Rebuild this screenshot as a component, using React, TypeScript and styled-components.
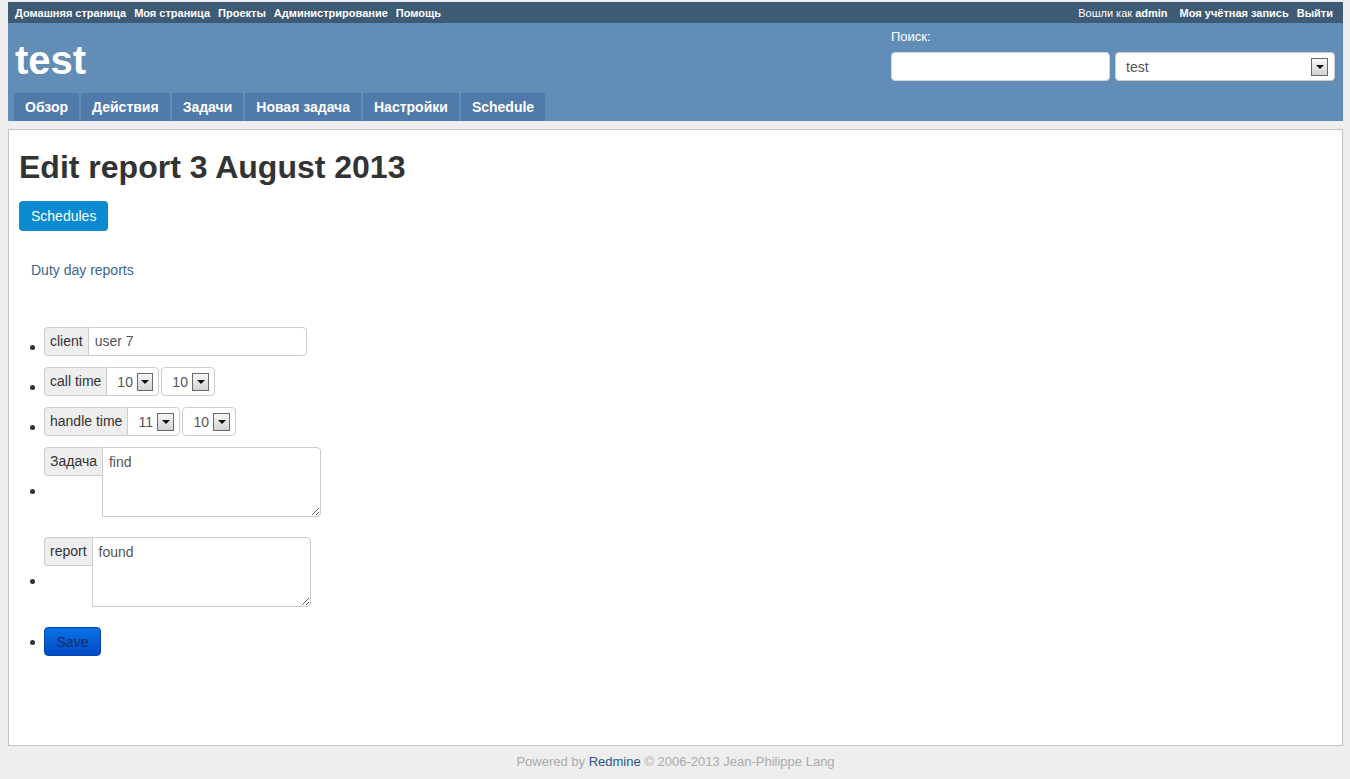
import React from "react";
import styled, { createGlobalStyle } from "styled-components";

const GlobalStyle = createGlobalStyle`
  html, body { margin: 0; padding: 0; }
  body {
    background: #eeeeee;
    font-family: "Liberation Sans", Arial, sans-serif;
    color: #333;
  }
  * { box-sizing: border-box; }
`;

const Wrapper = styled.div`
  margin: 2px 7px 0 8px;
`;

const TopMenu = styled.div`
  background: #3e5b76;
  height: 21px;
  display: flex;
  align-items: center;
  justify-content: space-between;
  padding: 0 10px 0 7px;
  font-size: 11px;
  font-weight: bold;
  color: #fff;
`;

const MenuGroup = styled.div<{ $gap: number }>`
  display: flex;
  align-items: center;
  gap: ${(p) => p.$gap}px;
`;

const MenuLink = styled.a`
  color: #fff;
  text-decoration: none;
  white-space: nowrap;
`;

const LoggedAs = styled.span`
  font-weight: normal;
  margin-right: 4px;
  white-space: nowrap;
  b { font-weight: bold; }
`;

const Header = styled.div`
  background: #628db6;
  height: 98px;
  display: grid;
  grid-template-columns: 1fr auto;
  grid-template-rows: 70px 28px;
`;

const SiteTitle = styled.h1`
  margin: 0;
  padding: 15px 0 0 7px;
  font-size: 40px;
  line-height: 44px;
  font-weight: bold;
  color: #fff;
`;

const Search = styled.div`
  padding: 6px 8px 0 0;
  display: flex;
  flex-direction: column;
`;

const SearchLabel = styled.div`
  color: #fff;
  font-size: 13px;
  line-height: 16px;
`;

const SearchRow = styled.div`
  margin-top: 7px;
  display: flex;
  gap: 5px;
`;

const SearchInput = styled.div`
  width: 219px;
  height: 29px;
  background: #fff;
  border: 1px solid #cfd8e0;
  border-radius: 4px;
`;

const SelectBox = styled.div<{ $width: number; $radius: string; $padRight: number }>`
  width: ${(p) => p.$width}px;
  height: 29px;
  background: #fff;
  border: 1px solid #ccc;
  border-radius: ${(p) => p.$radius};
  display: flex;
  align-items: center;
  padding: 0 ${(p) => p.$padRight}px 0 10px;
  font-size: 14px;
  color: #555;
`;

const SelectValue = styled.span`
  flex: 1;
`;

const ArrowBox = styled.span`
  width: 17px;
  height: 18px;
  border: 1px solid #6a6a6a;
  background: linear-gradient(#f8f8f8, #d2d2d2);
  display: flex;
  align-items: center;
  justify-content: center;
  margin-left: 4px;
  &::after {
    content: "";
    border-left: 4px solid transparent;
    border-right: 4px solid transparent;
    border-top: 4px solid #111;
  }
`;

const Tabs = styled.ul`
  grid-column: 1 / span 2;
  list-style: none;
  margin: 0;
  padding: 0 0 0 6px;
  display: flex;
  gap: 2px;
`;

const Tab = styled.li`
  background: #507aaa;
  color: #fff;
  font-weight: bold;
  font-size: 14px;
  height: 28px;
  line-height: 28px;
  padding: 0 11px;
`;

const Main = styled.div`
  margin-top: 8px;
  background: #fff;
  border: 1px solid #c4c4c4;
  height: 617px;
  padding: 18px 10px 0 10px;
`;

const Title = styled.h2`
  margin: 0;
  font-size: 32px;
  line-height: 38px;
  font-weight: bold;
  color: #333;
`;

const PrimaryButton = styled.a`
  display: inline-flex;
  align-items: center;
  margin-top: 15px;
  height: 30px;
  padding: 0 12px;
  background: #0a8ad0;
  border-radius: 4px;
  color: #fff;
  font-size: 14px;
  text-decoration: none;
`;

const SubLink = styled.a`
  display: block;
  margin-top: 29px;
  padding-left: 12px;
  font-size: 14px;
  line-height: 20px;
  color: #3a6592;
  text-decoration: none;
`;

const FormList = styled.ul`
  list-style: none;
  margin: 47px 0 0 0;
  padding: 0;
`;

const Item = styled.li<{ $after: number }>`
  display: flex;
  align-items: flex-start;
  padding-left: 11px;
  margin-bottom: ${(p) => p.$after}px;
`;

const Dot = styled.span<{ $top: number }>`
  width: 5px;
  height: 5px;
  border-radius: 50%;
  background: #333;
  margin-top: ${(p) => p.$top}px;
  margin-right: 9px;
  flex: none;
`;

const Group = styled.div`
  display: flex;
  align-items: flex-start;
`;

const Addon = styled.span`
  height: 29px;
  line-height: 27px;
  padding: 0 5px;
  background: #eee;
  border: 1px solid #ccc;
  border-right: none;
  border-radius: 4px 0 0 4px;
  font-size: 14px;
  color: #333;
  white-space: nowrap;
`;

const TextField = styled.div`
  width: 219px;
  height: 29px;
  line-height: 27px;
  border: 1px solid #ccc;
  border-radius: 0 4px 4px 0;
  padding: 0 6px;
  font-size: 14px;
  color: #555;
`;

const Spacer = styled.span`
  width: 2px;
`;

const TextArea = styled.textarea`
  width: 219px;
  height: 70px;
  border: 1px solid #ccc;
  border-radius: 0 4px 4px 0;
  padding: 5px 6px;
  font-family: "Liberation Sans", Arial, sans-serif;
  font-size: 14px;
  line-height: 18px;
  color: #555;
  margin: 0;
  outline: none;
`;

const SaveButton = styled.button`
  width: 57px;
  height: 29px;
  border: 1px solid #0046b0;
  border-radius: 4px;
  background: linear-gradient(#0872e6, #0449c4);
  color: #132f63;
  font-family: "Liberation Sans", Arial, sans-serif;
  font-size: 14px;
  padding: 0;
`;

const Footer = styled.div`
  text-align: center;
  margin-top: 8px;
  font-size: 13px;
  line-height: 16px;
  color: #aaa;
  a { color: #2a5685; text-decoration: none; }
`;

const Select = ({
  value,
  width,
  radius,
  padRight = 5,
}: {
  value: string;
  width: number;
  radius: string;
  padRight?: number;
}) => (
  <SelectBox $width={width} $radius={radius} $padRight={padRight}>
    <SelectValue>{value}</SelectValue>
    <ArrowBox />
  </SelectBox>
);

export default function App() {
  return (
    <>
      <GlobalStyle />
      <Wrapper>
        <TopMenu>
          <MenuGroup $gap={8}>
            <MenuLink>Домашняя страница</MenuLink>
            <MenuLink>Моя страница</MenuLink>
            <MenuLink>Проекты</MenuLink>
            <MenuLink>Администрирование</MenuLink>
            <MenuLink>Помощь</MenuLink>
          </MenuGroup>
          <MenuGroup $gap={8}>
            <LoggedAs>
              Вошли как <b>admin</b>
            </LoggedAs>
            <MenuLink>Моя учётная запись</MenuLink>
            <MenuLink>Выйти</MenuLink>
          </MenuGroup>
        </TopMenu>
        <Header>
          <SiteTitle>test</SiteTitle>
          <Search>
            <SearchLabel>Поиск:</SearchLabel>
            <SearchRow>
              <SearchInput />
              <Select value="test" width={220} radius="4px" padRight={6} />
            </SearchRow>
          </Search>
          <Tabs>
            <Tab>Обзор</Tab>
            <Tab>Действия</Tab>
            <Tab>Задачи</Tab>
            <Tab>Новая задача</Tab>
            <Tab>Настройки</Tab>
            <Tab>Schedule</Tab>
          </Tabs>
        </Header>
        <Main>
          <Title>Edit report 3 August 2013</Title>
          <PrimaryButton>Schedules</PrimaryButton>
          <SubLink>Duty day reports</SubLink>
          <FormList>
            <Item $after={11}>
              <Dot $top={18} />
              <Group>
                <Addon>client</Addon>
                <TextField>user 7</TextField>
              </Group>
            </Item>
            <Item $after={11}>
              <Dot $top={18} />
              <Group>
                <Addon>call time</Addon>
                <Select value="10" width={53} radius="0 4px 4px 0" />
                <Spacer />
                <Select value="10" width={54} radius="4px" />
              </Group>
            </Item>
            <Item $after={11}>
              <Dot $top={18} />
              <Group>
                <Addon>handle time</Addon>
                <Select value="11" width={53} radius="0 4px 4px 0" />
                <Spacer />
                <Select value="10" width={54} radius="4px" />
              </Group>
            </Item>
            <Item $after={20}>
              <Dot $top={42} />
              <Group>
                <Addon>Задача</Addon>
                <TextArea readOnly defaultValue="find" />
              </Group>
            </Item>
            <Item $after={20}>
              <Dot $top={42} />
              <Group>
                <Addon>report</Addon>
                <TextArea readOnly defaultValue="found" />
              </Group>
            </Item>
            <Item $after={0}>
              <Dot $top={13} />
              <SaveButton>Save</SaveButton>
            </Item>
          </FormList>
        </Main>
        <Footer>
          Powered by <a>Redmine</a> © 2006-2013 Jean-Philippe Lang
        </Footer>
      </Wrapper>
    </>
  );
}
